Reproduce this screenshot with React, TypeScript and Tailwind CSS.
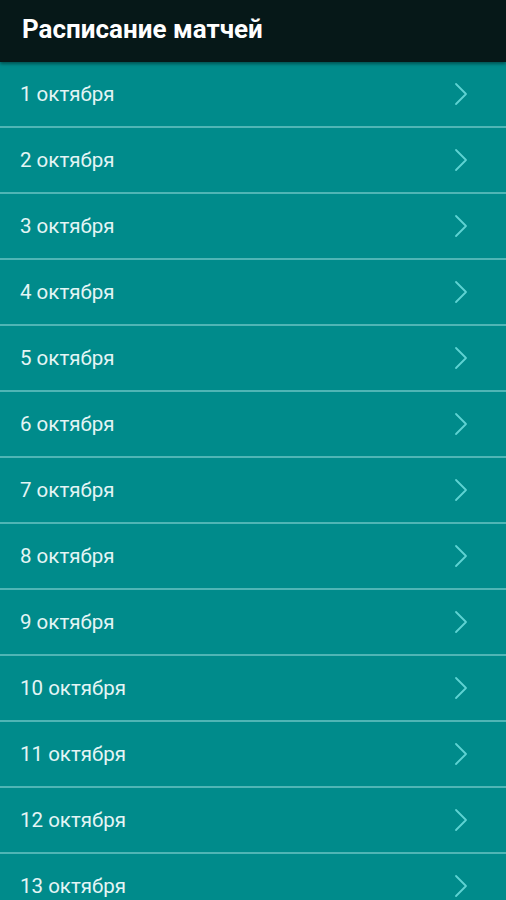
import React from 'react';

const days = Array.from({ length: 13 }, (_, i) => i + 1);

function Chevron() {
  return (
    <svg width="14" height="24" viewBox="0 0 14 24" fill="none" className="shrink-0">
      <path d="M2 2 L12 12 L2 22" stroke="#5ed3d3" strokeWidth="1.8" strokeLinecap="round" strokeLinejoin="round" />
    </svg>
  );
}

export default function App() {
  return (
    <div className="w-[506px] h-[900px] overflow-hidden bg-[#008b8b]" style={{ fontFamily: 'Roboto, "Noto Sans", sans-serif' }}>
      <header className="h-[62px] bg-[#061818] flex items-center px-[22px] pb-[3px] shadow-[0_2px_3px_rgba(0,0,0,0.4)] relative">
        <h1 className="text-[26px] font-bold text-white">Расписание матчей</h1>
      </header>
      <ul>
        {days.map(d => (
          <li key={d} className="h-[66px] border-b-2 border-[#4fb5b5] flex items-center justify-between pl-[20px] pr-[38px]">
            <span className="text-[20.5px] text-[#e4f5f5]">{d} октября</span>
            <Chevron />
          </li>
        ))}
      </ul>
    </div>
  );
}
